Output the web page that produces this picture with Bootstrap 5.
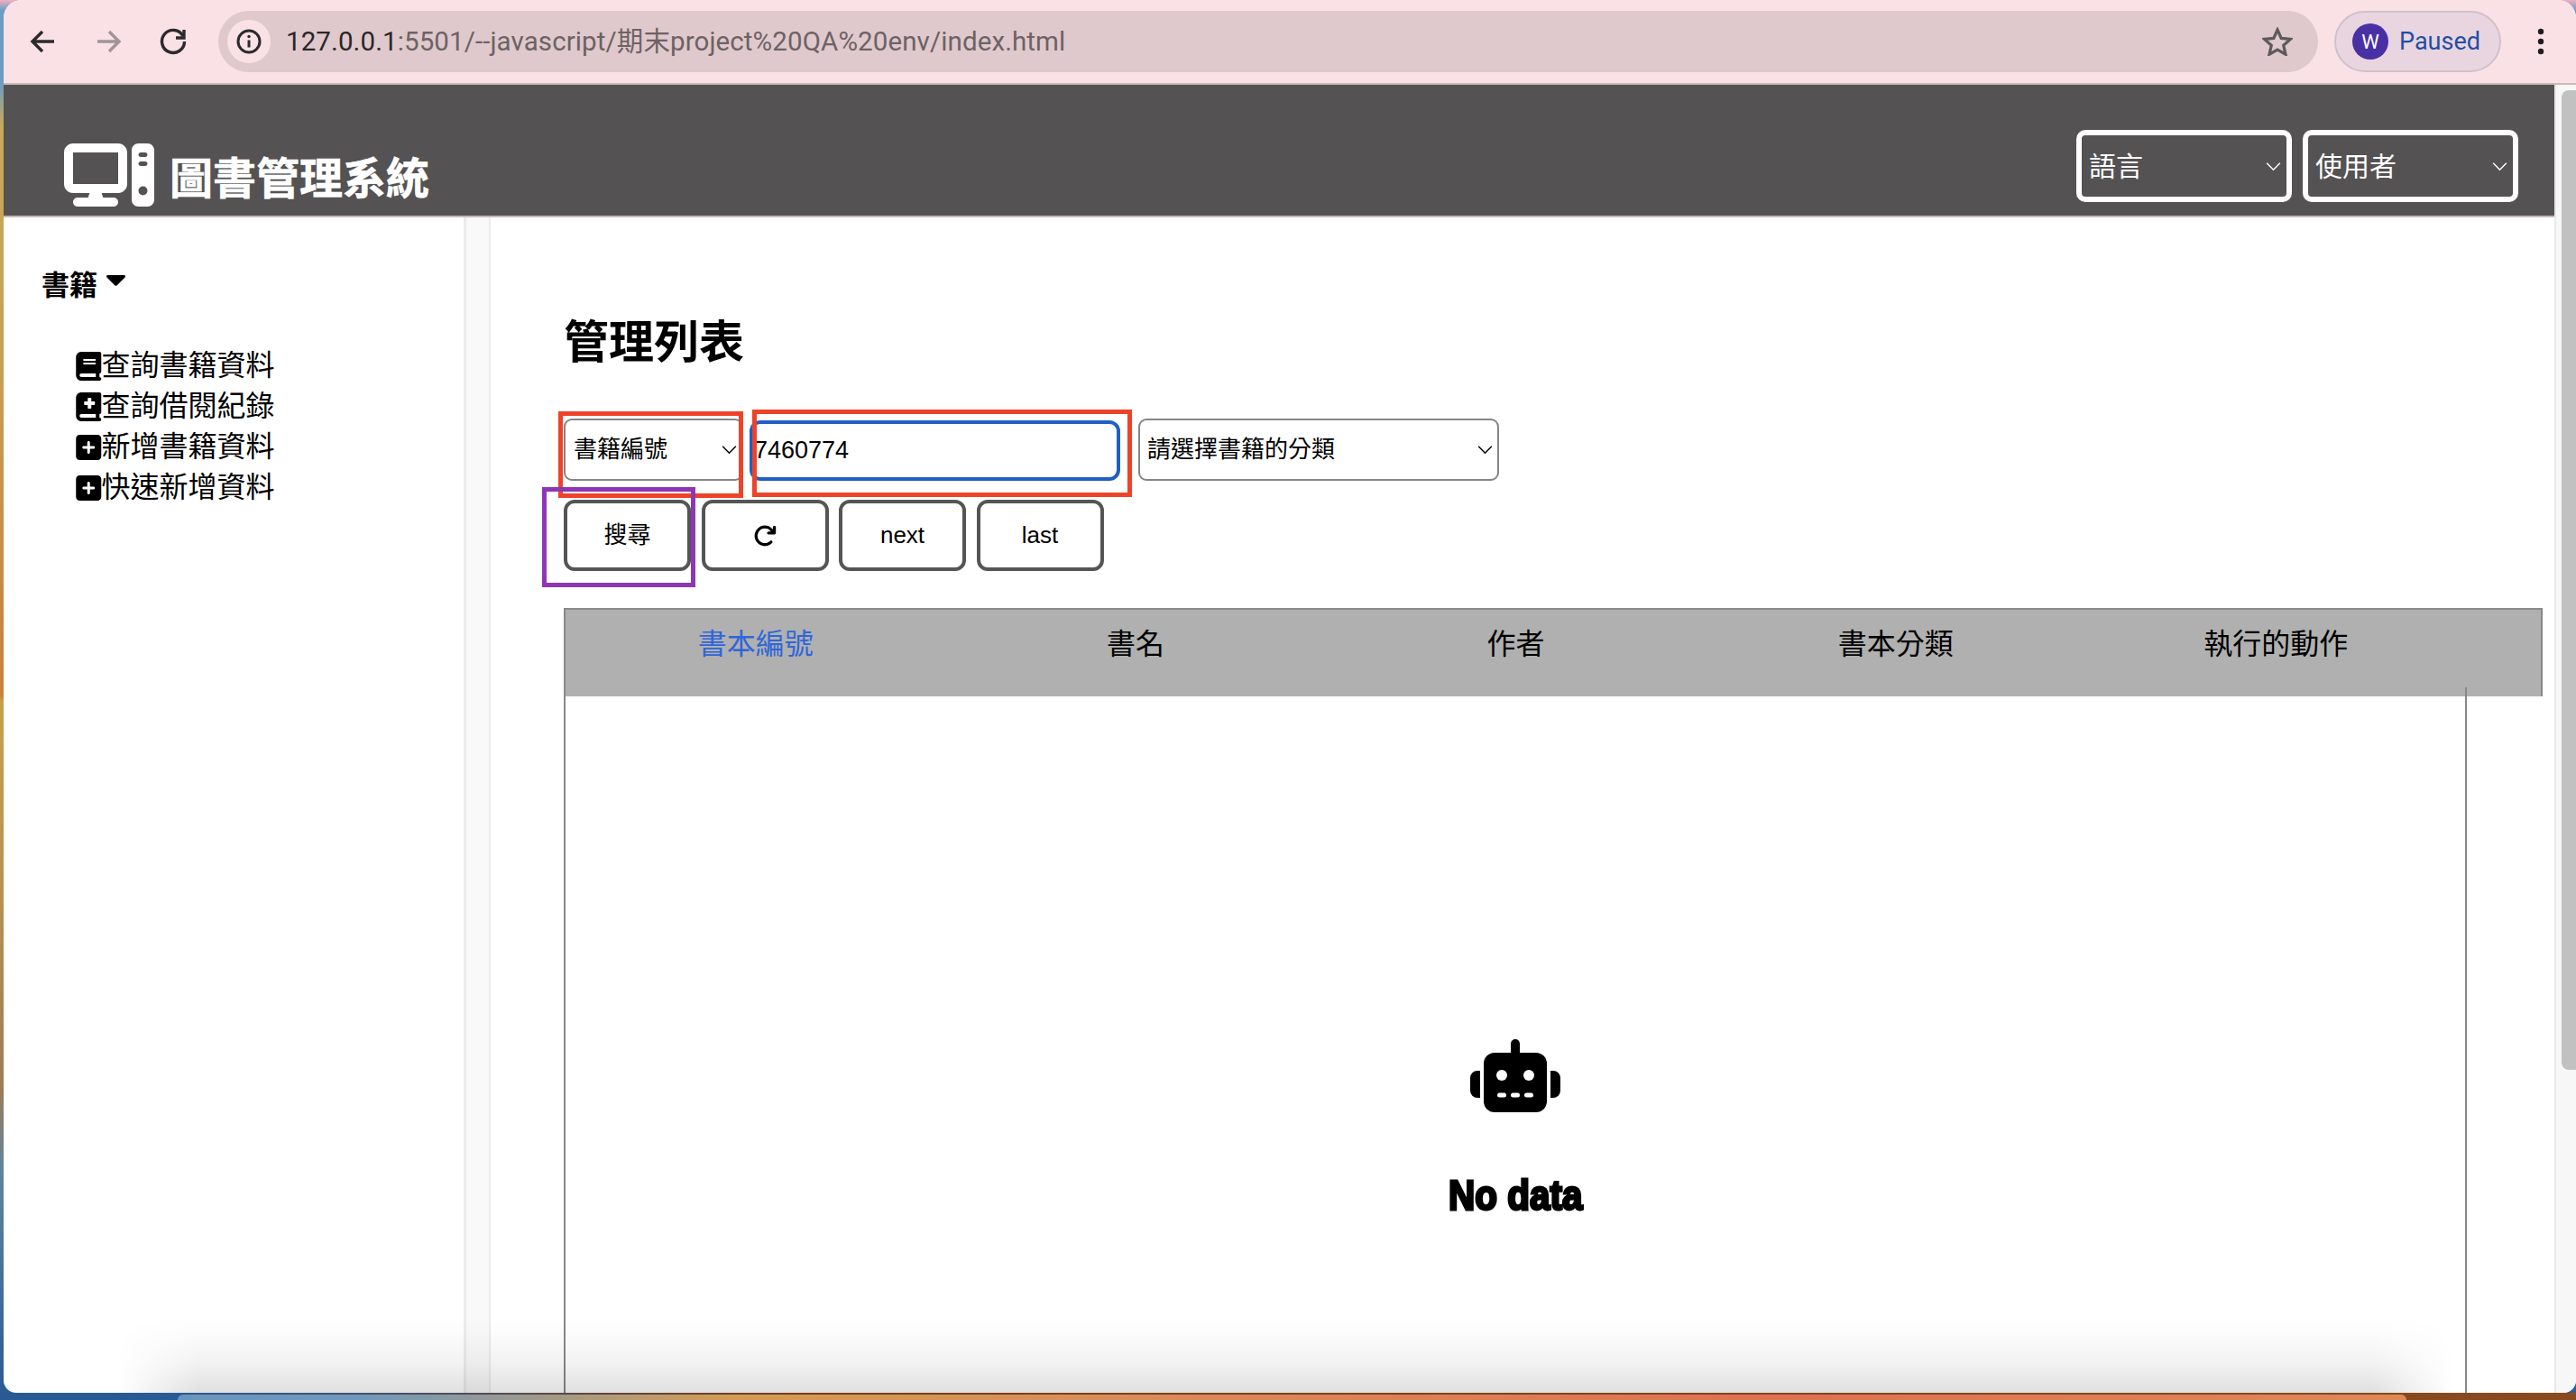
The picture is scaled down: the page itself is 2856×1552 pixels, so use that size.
<!DOCTYPE html>
<html lang="zh-Hant">
<head>
<meta charset="utf-8">
<title>圖書管理系統</title>
<link href="https://cdn.jsdelivr.net/npm/bootstrap@5.3.0/dist/css/bootstrap.min.css" rel="stylesheet">
<style>
html,body{height:100%;margin:0;overflow:hidden}
body{font-family:"Liberation Sans","Noto Sans CJK TC",sans-serif;color:#000;position:relative;
 background:linear-gradient(180deg,#f0b0c0 0,#6a9cc4 12px,#6a9cc4 90px,#c8a95a 140px,#c8a050 400px,#c8813c 770px,#c8a04a 778px,#b89050 1000px,#a07b55 1200px,#5e84a0 1300px,#2a5a94 1552px)}
.desktop-dock{position:absolute;left:197px;width:2471px;bottom:0;height:6px;border-radius:6px 6px 0 0;background:linear-gradient(90deg,#6a94bd,#6f98bb 8%,#d49a55 25%,#d98a58 45%,#e07050 72%,#dc8a55 100%)}
.desktop-strip{position:absolute;left:0;right:0;bottom:0;height:8px;background:linear-gradient(90deg,#2a5a94 0,#2a5a94 190px,#7a3d18 900px,#8a4a20 100%)}
.app-window{position:absolute;left:4px;right:0;top:0;bottom:8px;border-radius:20px 20px 14px 14px;overflow:hidden;background:#fff}
.chrome-bar{height:94px;background:#fae1e6;border-bottom:2px solid #cbb8bb;padding-left:44px;padding-right:24px;flex:none}
.chrome-ico{width:40px;height:40px;flex:none;margin-right:32px;margin-left:-20px}
.chrome-ico+.chrome-ico{margin-left:0}
.omni{margin-left:-2px;width:2328px;height:68px;border-radius:34px;background:#dfc9cc;padding:0 28px 0 10px;flex:none}
.omni-info{width:48px;height:48px;border-radius:50%;background:#fae1e6;flex:none}
.omni-url{font-family:Roboto,"Noto Sans CJK TC",sans-serif;font-size:29.5px;color:#6d6265;margin-left:17px;white-space:nowrap;letter-spacing:.1px;font-variant-ligatures:none}
.omni-url b{font-weight:400;color:#2b2729}
.paused-pill{margin-left:18px;width:185px;height:68px;border-radius:34px;background:#e9d5e0;border:2px solid #cfc0cc;padding-left:18px;flex:none}
.paused-av{width:40px;height:40px;border-radius:50%;background:#4a30a5;color:#fff;font:22px Roboto,sans-serif;flex:none}
.paused-txt{font:27px Roboto,sans-serif;color:#1f4fa3;margin-left:12px}
.kebab{margin-left:40px;flex:none}
.page-col{min-width:0}
.top-head{height:147px;background:#545253;border-bottom:2px solid #c9b7ba;padding:0 40px 10px 66px;flex:none}
.brand-logo{width:102px;height:70px;flex:none}
.brand-name{font-size:48px;font-weight:700;color:#fff;line-height:1;margin-left:16px;margin-bottom:6px;white-space:nowrap;-webkit-text-stroke:.6px #fff}
.head-sel.form-select{width:239px;height:80px;border:6px solid #fff;border-radius:10px;background-color:#545253;color:#fff;font-size:30px;padding:0 0 0 8px;
 background-image:url("data:image/svg+xml,%3csvg xmlns='http://www.w3.org/2000/svg' viewBox='0 0 18 12'%3e%3cpath fill='none' stroke='%23fff' stroke-width='1.6' d='M1 2l8 8 8-8'/%3e%3c/svg%3e");background-size:17px 11px;background-position:right 6px center;box-shadow:none}
.head-sels{gap:12px;margin-bottom:5px}
.body-row{min-height:0}
.side-nav{width:513px;padding:53px 0 0 42px;border-right:3px solid #ececec;flex:none}
.side-title{font-size:31px;font-weight:700;line-height:46px;margin-bottom:43px}
.side-caret{width:21px;height:12px;margin-left:10px;vertical-align:10px}
.side-link{display:flex;align-items:center;height:45px;padding-left:38px;font-size:32px;color:#000;text-decoration:none;white-space:nowrap;line-height:45px}
.side-link svg{width:28.5px;height:32px;flex:none}
.side-strip{width:27px;flex:none;background:#f9f9f9;border-right:2px solid #ececec}
.main-pane{padding:109px 0 0 81px;min-width:0}
.pane-title{font-size:50px;font-weight:700;line-height:60px;margin:0 0 54px}
.filter-row{height:69px;position:relative}
.filter-sel.form-select{height:69px;border:2px solid #858585;border-radius:9px;font-size:26px;padding:0 0 0 9px;color:#000;background-color:#fff;
 background-image:url("data:image/svg+xml,%3csvg xmlns='http://www.w3.org/2000/svg' viewBox='0 0 18 12'%3e%3cpath fill='none' stroke='%23000' stroke-width='1.6' d='M1 2l8 8 8-8'/%3e%3c/svg%3e");background-size:17px 11px;background-position:right 5px center;box-shadow:none}
.sel-a{width:199px;flex:none}
.filter-sel.sel-b{width:400px;flex:none;margin-left:20px;padding-left:8px}
.focus-input.form-control{width:411px;height:67px;margin:2px 0 0 7px;flex:none;border:4px solid #1f5fc6;border-radius:12px;font-size:27px;padding:0 0 0 1px;color:#000;box-shadow:none}
.anno{position:absolute;pointer-events:none;z-index:3}
.anno-red{border:5px solid #ee4328}
.anno-purple{border:5px solid #8e37b5}
.act-row{gap:11.5px;margin-top:21px;position:relative}
.act-btn.btn{width:141px;height:79px;border:4px solid #555;border-radius:12px;background:#fff;color:#000;font-size:26px;padding:0;display:flex;align-items:center;justify-content:center}
.grid-head{margin-top:41px;height:98px;width:2194px;background:#b0b0b0;border:2px solid #888;border-bottom:0}
.grid-th{width:421.4px;flex:none;text-align:center;font-size:32px;line-height:40px;padding-top:18px;white-space:nowrap}
.grid-th a{color:#2f66d8;text-decoration:none}
.grid-body{position:relative;margin-top:-10px;width:2110px;height:790px;border:solid #888;border-width:0 2px;padding-top:390px}
.bot-ico{width:102px;height:81px}
.no-data{font-size:46px;font-weight:700;line-height:1;margin-top:69px;-webkit-text-stroke:3px #000;transform:scaleX(.88);font-family:"Liberation Sans",sans-serif}
.scroll-track{width:24px;flex:none;background:#f7f7f7;border-left:2px solid #e8e8e8;padding:6px 0 0 6px}
.scroll-thumb{height:1086px;background:#c1c1c1;border-radius:8px 0 0 8px}
.dock-shade{position:absolute;left:126px;right:136px;bottom:0;height:84px;pointer-events:none;z-index:5;
 background:linear-gradient(180deg,rgba(0,0,0,0) 0,rgba(0,0,0,.012) 20%,rgba(0,0,0,.05) 60%,rgba(0,0,0,.12) 100%);
 -webkit-mask-image:linear-gradient(90deg,transparent 0,#000 90px,#000 calc(100% - 90px),transparent 100%);mask-image:linear-gradient(90deg,transparent 0,#000 90px,#000 calc(100% - 90px),transparent 100%)}
</style>
</head>
<body>
<div class="desktop-strip"></div>
<div class="desktop-dock"></div>
<div class="app-window d-flex flex-column">
  <div class="chrome-bar d-flex align-items-center">
    <svg class="chrome-ico" viewBox="0 0 40 40" fill="none" stroke="#2b2a2c" stroke-width="3.4"><path d="M32 20H9M19 9L8 20l11 11"/></svg>
    <svg class="chrome-ico" viewBox="0 0 40 40" fill="none" stroke="#a09497" stroke-width="3.4"><path d="M8 20h23M21 9l11 11-11 11"/></svg>
    <svg class="chrome-ico" viewBox="0 0 40 40" fill="none" stroke="#2b2a2c" stroke-width="3.4"><path d="M31 14a12.500 12.500 0 1 0 1.500 6"/><path d="M32 7v9h-9" /></svg>
    <div class="omni d-flex align-items-center">
      <div class="omni-info d-flex align-items-center justify-content-center">
        <svg width="28" height="28" viewBox="0 0 28 28" fill="none" stroke="#2b2a2c" stroke-width="3"><circle cx="14" cy="14" r="12"/><path d="M14 12.500v8"/><circle cx="14" cy="8.500" r="1.700" fill="#2b2a2c" stroke="none"/></svg>
      </div>
      <div class="omni-url flex-grow-1"><b>127.0.0.1</b>:5501/--javascript/期末project%20QA%20env/index.html</div>
      <svg width="34" height="32" viewBox="0 0 34 32" fill="none" stroke="#5e5a5c" stroke-width="3.200"><path d="M17 3l4.200 9.400 10.200 1-7.700 6.800 2.300 10L17 25l-9 5.200 2.300-10-7.700-6.800 10.200-1z"/></svg>
    </div>
    <div class="paused-pill d-flex align-items-center">
      <div class="paused-av d-flex align-items-center justify-content-center">W</div>
      <span class="paused-txt">Paused</span>
    </div>
    <svg class="kebab" width="8" height="30" viewBox="0 0 8 30" fill="#1f1d1f"><circle cx="4" cy="4" r="3.200"/><circle cx="4" cy="15" r="3.200"/><circle cx="4" cy="26" r="3.200"/></svg>
  </div>
  <div class="d-flex flex-grow-1 body-row">
    <div class="page-col flex-grow-1 d-flex flex-column">
      <nav class="top-head d-flex align-items-end justify-content-between">
        <div class="d-flex align-items-end">
          <svg class="brand-logo" viewBox="0 32 640 448" fill="#fff"><path d="M384 96V320H64L64 96H384zM64 32C28.7 32 0 60.700 0 96V320c0 35.300 28.700 64 64 64H181.300l-10.700 32H96c-17.700 0-32 14.300-32 32s14.300 32 32 32H352c17.700 0 32-14.300 32-32s-14.300-32-32-32H277.300l-10.700-32H384c35.300 0 64-28.700 64-64V96c0-35.300-28.700-64-64-64H64zm464 0c-26.500 0-48 21.500-48 48V432c0 26.500 21.500 48 48 48h64c26.500 0 48-21.500 48-48V80c0-26.500-21.500-48-48-48H528zm16 64h32c8.800 0 16 7.200 16 16s-7.200 16-16 16H544c-8.800 0-16-7.200-16-16s7.200-16 16-16zm-16 80c0-8.800 7.200-16 16-16h32c8.800 0 16 7.200 16 16s-7.200 16-16 16H544c-8.800 0-16-7.200-16-16zm32 160a32 32 0 1 1 0 64 32 32 0 1 1 0-64z"/></svg>
          <div class="brand-name">圖書管理系統</div>
        </div>
        <div class="d-flex head-sels">
          <select class="form-select head-sel"><option>語言</option></select>
          <select class="form-select head-sel"><option>使用者</option></select>
        </div>
      </nav>
      <div class="d-flex flex-grow-1 body-row">
        <aside class="side-nav">
          <div class="side-title">書籍<svg class="side-caret" viewBox="0 0 21 12" fill="#000"><path d="M1.500 0h18c1.300 0 1.900 1.500 1 2.400l-9 9c-.6.6-1.400.6-2 0l-9-9C-.4 1.500.2 0 1.500 0z"/></svg></div>
          <a class="side-link" href="#"><svg viewBox="0 0 448 512" fill="#000"><path d="M96 0C43 0 0 43 0 96V416c0 53 43 96 96 96H384h32c17.700 0 32-14.300 32-32s-14.300-32-32-32V384c17.700 0 32-14.300 32-32V32c0-17.700-14.300-32-32-32H384 96zm0 384H352v64H96c-17.700 0-32-14.300-32-32s14.300-32 32-32zm32-240c0-8.800 7.200-16 16-16H336c8.800 0 16 7.200 16 16s-7.200 16-16 16H144c-8.800 0-16-7.200-16-16zm16 48H336c8.800 0 16 7.200 16 16s-7.200 16-16 16H144c-8.800 0-16-7.200-16-16s7.200-16 16-16z"/></svg>查詢書籍資料</a>
          <a class="side-link" href="#"><svg viewBox="0 0 448 512" fill="#000"><path d="M0 96C0 43 43 0 96 0H384h32c17.700 0 32 14.300 32 32V352c0 17.700-14.300 32-32 32v64c17.700 0 32 14.300 32 32s-14.300 32-32 32H384 96c-53 0-96-43-96-96V96zM64 416c0 17.700 14.300 32 32 32H352V384H96c-17.700 0-32 14.300-32 32zM208 112v48H160c-8.800 0-16 7.200-16 16v32c0 8.800 7.200 16 16 16h48v48c0 8.800 7.200 16 16 16h32c8.800 0 16-7.200 16-16V224h48c8.800 0 16-7.200 16-16V176c0-8.800-7.200-16-16-16H272V112c0-8.800-7.200-16-16-16H224c-8.800 0-16 7.200-16 16z"/></svg>查詢借閱紀錄</a>
          <a class="side-link" href="#"><svg viewBox="0 0 448 512" fill="#000"><path d="M64 32C28.700 32 0 60.700 0 96V416c0 35.300 28.700 64 64 64H384c35.300 0 64-28.700 64-64V96c0-35.300-28.700-64-64-64H64zM200 344V280H136c-13.300 0-24-10.700-24-24s10.700-24 24-24h64V168c0-13.300 10.700-24 24-24s24 10.700 24 24v64h64c13.300 0 24 10.700 24 24s-10.700 24-24 24H248v64c0 13.300-10.700 24-24 24s-24-10.700-24-24z"/></svg>新增書籍資料</a>
          <a class="side-link" href="#"><svg viewBox="0 0 448 512" fill="#000"><path d="M64 32C28.700 32 0 60.700 0 96V416c0 35.300 28.700 64 64 64H384c35.300 0 64-28.700 64-64V96c0-35.300-28.700-64-64-64H64zM200 344V280H136c-13.300 0-24-10.700-24-24s10.700-24 24-24h64V168c0-13.300 10.700-24 24-24s24 10.700 24 24v64h64c13.300 0 24 10.700 24 24s-10.700 24-24 24H248v64c0 13.300-10.700 24-24 24s-24-10.700-24-24z"/></svg>快速新增資料</a>
        </aside>
        <div class="side-strip"></div>
        <main class="main-pane flex-grow-1">
          <h1 class="pane-title">管理列表</h1>
          <div class="filter-row d-flex">
            <select class="form-select filter-sel sel-a"><option>書籍編號</option></select>
            <input class="form-control focus-input" value="7460774">
            <select class="form-select filter-sel sel-b"><option>請選擇書籍的分類</option></select>
            <div class="anno anno-red" style="left:-6px;top:-8px;width:205px;height:96px"></div>
            <div class="anno anno-red" style="left:209px;top:-10px;width:421px;height:97px"></div>
          </div>
          <div class="act-row d-flex">
            <button class="btn act-btn" type="button">搜尋</button>
            <button class="btn act-btn" type="button"><svg width="26" height="26" viewBox="0 0 512 512" fill="#000"><path d="M386.300 160H336c-17.700 0-32 14.300-32 32s14.300 32 32 32H464c17.700 0 32-14.300 32-32V64c0-17.700-14.300-32-32-32s-32 14.300-32 32v51.200L414.400 97.600c-87.500-87.500-229.300-87.500-316.800 0s-87.500 229.300 0 316.800s229.300 87.500 316.800 0c12.500-12.500 12.500-32.800 0-45.300s-32.800-12.500-45.300 0c-62.500 62.500-163.800 62.500-226.300 0s-62.500-163.800 0-226.300s163.800-62.500 226.300 0L386.300 160z"/></svg></button>
            <button class="btn act-btn" type="button">next</button>
            <button class="btn act-btn" type="button">last</button>
            <div class="anno anno-purple" style="left:-24px;top:-14px;width:170px;height:111px"></div>
          </div>
          <div class="grid-head d-flex">
            <div class="grid-th"><a href="#">書本編號</a></div>
            <div class="grid-th">書名</div>
            <div class="grid-th">作者</div>
            <div class="grid-th">書本分類</div>
            <div class="grid-th">執行的動作</div>
          </div>
          <div class="grid-body d-flex flex-column align-items-center">
            <svg class="bot-ico" viewBox="0 0 102 81" fill="#000"><rect x="46" y="0" width="10" height="20" rx="5"/><rect x="16" y="15" width="70" height="66" rx="12"/><path d="M12 35H9a8 8 0 0 0-8 8v14a8 8 0 0 0 8 8h3zM90 35h3a8 8 0 0 1 8 8v14a8 8 0 0 1-8 8h-3z"/><g fill="#fff"><circle cx="36" cy="40" r="6"/><circle cx="66" cy="40" r="6"/><rect x="31" y="59.500" width="10" height="5" rx="2.500"/><rect x="46" y="59.500" width="10" height="5" rx="2.500"/><rect x="61" y="59.500" width="10" height="5" rx="2.500"/></g></svg>
            <div class="no-data">No data</div>
          </div>
        </main>
      </div>
    </div>
    <div class="scroll-track"><div class="scroll-thumb"></div></div>
  </div>
  <div class="dock-shade"></div>
</div>
</body>
</html>
